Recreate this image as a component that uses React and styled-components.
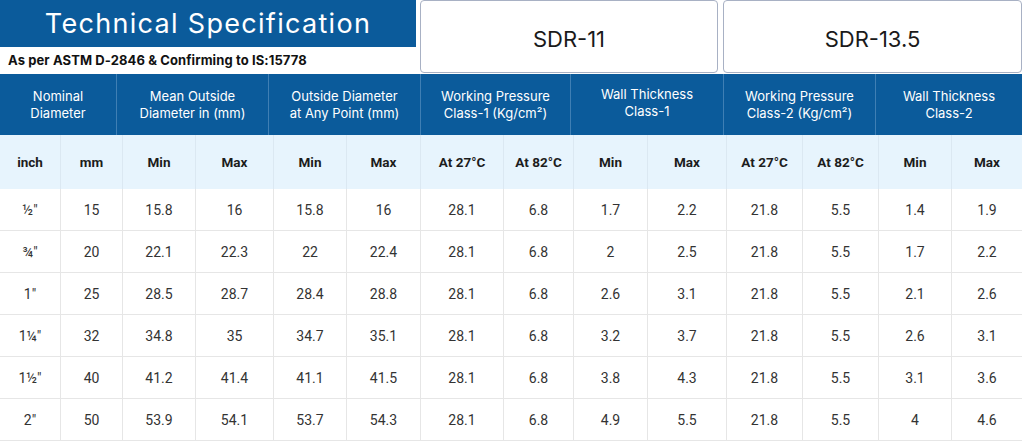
import React from "react";
import styled, { createGlobalStyle } from "styled-components";

const BLUE = "#0b5b9b";

const GlobalStyle = createGlobalStyle`
  html, body {
    margin: 0;
    padding: 0;
    background: #fff;
  }
  body {
    font-family: "Inter", "Open Sans", sans-serif;
  }
`;

const Page = styled.div`
  width: 1022px;
  display: flex;
  flex-direction: column;
`;

const TopSection = styled.div`
  display: flex;
  height: 73px;
  margin-bottom: 1px;
`;

const TitleBlock = styled.div`
  width: 418px;
  display: flex;
  flex-direction: column;
`;

const TitleBar = styled.div`
  width: 416px;
  height: 47px;
  background: ${BLUE};
  color: #fff;
  display: flex;
  align-items: center;
  justify-content: center;
  font-family: "Inter", sans-serif;
  font-size: 27px;
  letter-spacing: 1.3px;
  font-weight: 400;
`;

const SubTitle = styled.div`
  flex: 1;
  display: flex;
  align-items: center;
  padding-left: 8px;
  font-family: "Inter", sans-serif;
  font-weight: 700;
  font-size: 13px;
  color: #111;
  letter-spacing: 0.1px;
`;

const SdrRow = styled.div`
  flex: 1;
  display: flex;
  gap: 5px;
  margin-left: 2px;
`;

const SdrBox = styled.div`
  flex: ${props => props.grow};
  box-sizing: border-box;
  border: 1px solid #a8b1c4;
  border-radius: 4px;
  display: flex;
  align-items: center;
  justify-content: center;
  padding-top: 5px;
  font-family: "Inter", sans-serif;
  font-size: 22px;
  color: #1a1a1a;
`;

const HeaderRow = styled.div`
  display: grid;
  grid-template-columns: 116px 152px 152px 150px 153px 152px 147px;
  height: 61px;
  background: ${BLUE};
`;

const GroupCell = styled.div`
  display: flex;
  align-items: center;
  justify-content: center;
  text-align: center;
  color: #fff;
  font-family: "Inter", sans-serif;
  font-size: 13px;
  line-height: 17px;
  padding-bottom: ${props => (props.high ? "4px" : "0")};
  border-left: ${props => (props.first ? "none" : "1px solid #3f7fb4")};
`;

const COLS =
  "60px 62px 73px 78px 73px 74px 83px 70px 74px 79px 76px 76px 73px 71px";

const SubHeaderRow = styled.div`
  display: grid;
  grid-template-columns: ${COLS};
  height: 54px;
  background: #e7f4fd;
`;

const SubCell = styled.div`
  display: flex;
  align-items: center;
  justify-content: center;
  font-family: "Roboto", "Liberation Sans", sans-serif;
  font-weight: 700;
  font-size: 13.5px;
  color: #1c1c1c;
  border-left: ${props => (props.first ? "none" : "1px solid #dbe8f2")};
`;

const DataRow = styled.div`
  display: grid;
  grid-template-columns: ${COLS};
  height: 42px;
  border-bottom: 1px solid #e6e6e6;
  box-sizing: border-box;
`;

const DataCell = styled.div`
  display: flex;
  align-items: center;
  justify-content: center;
  font-family: "Roboto", "Liberation Sans", sans-serif;
  font-size: 14px;
  color: #333;
  border-left: ${props => (props.first ? "none" : "1px solid #e6e6e6")};
`;

const groups = [
  ["Nominal", "Diameter"],
  ["Mean Outside", "Diameter in (mm)"],
  ["Outside Diameter", "at Any Point (mm)"],
  ["Working Pressure", "Class-1 (Kg/cm²)"],
  ["Wall Thickness", "Class-1"],
  ["Working Pressure", "Class-2 (Kg/cm²)"],
  ["Wall Thickness", "Class-2"],
];

const subLabels = [
  "inch", "mm", "Min", "Max", "Min", "Max", "At 27°C", "At 82°C",
  "Min", "Max", "At 27°C", "At 82°C", "Min", "Max",
];

const rows = [
  ["½″", "15", "15.8", "16", "15.8", "16", "28.1", "6.8", "1.7", "2.2", "21.8", "5.5", "1.4", "1.9"],
  ["¾″", "20", "22.1", "22.3", "22", "22.4", "28.1", "6.8", "2", "2.5", "21.8", "5.5", "1.7", "2.2"],
  ["1″", "25", "28.5", "28.7", "28.4", "28.8", "28.1", "6.8", "2.6", "3.1", "21.8", "5.5", "2.1", "2.6"],
  ["1¼″", "32", "34.8", "35", "34.7", "35.1", "28.1", "6.8", "3.2", "3.7", "21.8", "5.5", "2.6", "3.1"],
  ["1½″", "40", "41.2", "41.4", "41.1", "41.5", "28.1", "6.8", "3.8", "4.3", "21.8", "5.5", "3.1", "3.6"],
  ["2″", "50", "53.9", "54.1", "53.7", "54.3", "28.1", "6.8", "4.9", "5.5", "21.8", "5.5", "4", "4.6"],
];

const App = () => {
  return (
    <Page>
      <GlobalStyle />
      <TopSection>
        <TitleBlock>
          <TitleBar>Technical Specification</TitleBar>
          <SubTitle>As per ASTM D-2846 &amp; Confirming to IS:15778</SubTitle>
        </TitleBlock>
        <SdrRow>
          <SdrBox grow={298}>SDR-11</SdrBox>
          <SdrBox grow={299}>SDR-13.5</SdrBox>
        </SdrRow>
      </TopSection>
      <HeaderRow>
        {groups.map((g, i) => (
          <GroupCell key={i} first={i === 0} high={i === 4}>
            {g[0]}
            <br />
            {g[1]}
          </GroupCell>
        ))}
      </HeaderRow>
      <SubHeaderRow>
        {subLabels.map((l, i) => (
          <SubCell key={i} first={i === 0}>
            {l}
          </SubCell>
        ))}
      </SubHeaderRow>
      {rows.map((r, ri) => (
        <DataRow key={ri}>
          {r.map((v, ci) => (
            <DataCell key={ci} first={ci === 0}>
              {v}
            </DataCell>
          ))}
        </DataRow>
      ))}
    </Page>
  );
};

export default App;
